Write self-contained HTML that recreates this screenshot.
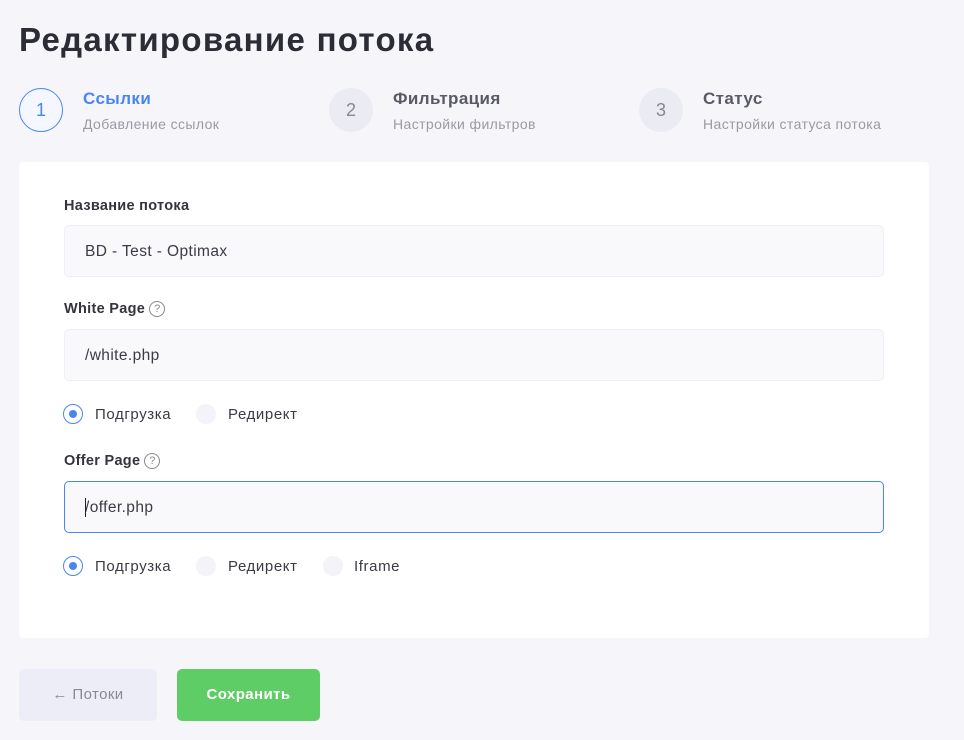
<!DOCTYPE html>
<html><head><meta charset="utf-8"><style>
*{box-sizing:border-box;margin:0;padding:0}
body{width:964px;height:740px;background:#f5f5fa;font-family:"Liberation Sans",sans-serif;position:relative;overflow:hidden;color:#2f303a}
.a{position:absolute;white-space:nowrap}
h1{position:absolute;left:19px;top:21px;font-size:33px;font-weight:bold;color:#2b2c36;letter-spacing:1.3px}
.circ{position:absolute;width:44px;height:44px;border-radius:50%;background:#ebebf3;color:#888;font-size:18px;text-align:center;line-height:44px}
.st{font-size:17px;font-weight:bold;color:#5a5a66;letter-spacing:0.4px}
.ss{font-size:14px;color:#9a9aa3;letter-spacing:0.4px}
.card{position:absolute;left:19px;top:162px;width:910px;height:476px;background:#fff;border-radius:4px}
.lbl{font-size:14.5px;font-weight:bold;color:#33343d;letter-spacing:0.3px}
.inp{position:absolute;left:64px;width:820px;height:52px;background:#f9f9fc;border:1px solid #eeeef4;border-radius:5px;font-size:15.5px;color:#3a3b44;padding-left:20px;line-height:52px;letter-spacing:0.4px}
.r{position:absolute;width:20px;height:20px;border-radius:50%;background:#f3f3f9}
.r.on{background:#fff;border:1px solid #4a86f0}
.r.on::after{content:"";position:absolute;left:5px;top:5px;width:8px;height:8px;border-radius:50%;background:#4a86f0}
.rt{font-size:15px;color:#3a3b44;letter-spacing:0.6px}
.q{display:inline-block;width:16px;height:16px;border:1.3px solid #888;border-radius:50%;font-size:11px;text-align:center;line-height:14px;color:#888;vertical-align:1px;margin-left:4px;font-weight:normal;letter-spacing:0}
</style></head><body>
<h1>Редактирование потока</h1>
<div class="circ" style="left:19px;top:88px;background:#f4f7ff;border:1px solid #4a86f0;color:#4a86f0;line-height:42px">1</div>
<div class="a st" style="left:83px;top:89px;color:#4a86f0">Ссылки</div>
<div class="a ss" style="left:83px;top:116px">Добавление ссылок</div>
<div class="circ" style="left:329px;top:88px">2</div>
<div class="a st" style="left:393px;top:89px">Фильтрация</div>
<div class="a ss" style="left:393px;top:116px">Настройки фильтров</div>
<div class="circ" style="left:639px;top:88px">3</div>
<div class="a st" style="left:703px;top:89px">Статус</div>
<div class="a ss" style="left:703px;top:116px">Настройки статуса потока</div>
<div class="card"></div>
<div class="a lbl" style="left:64px;top:198px">Название потока</div>
<div class="inp" style="top:225px">BD - Test - Optimax</div>
<div class="a lbl" style="left:64px;top:301px">White Page<span class="q">?</span></div>
<div class="inp" style="top:329px">/white.php</div>
<div class="r on" style="left:63px;top:404px"></div><div class="a rt" style="left:95px;top:406px">Подгрузка</div>
<div class="r" style="left:196px;top:404px"></div><div class="a rt" style="left:228px;top:406px">Редирект</div>
<div class="a lbl" style="left:64px;top:453px">Offer Page<span class="q">?</span></div>
<div class="inp" style="top:481px;border-color:#4a86f0">/offer.php</div>
<div class="a" style="left:85px;top:498px;width:1px;height:19px;background:#222"></div>
<div class="r on" style="left:63px;top:556px"></div><div class="a rt" style="left:95px;top:558px">Подгрузка</div>
<div class="r" style="left:196px;top:556px"></div><div class="a rt" style="left:228px;top:558px">Редирект</div>
<div class="r" style="left:323px;top:556px"></div><div class="a rt" style="left:354px;top:558px">Iframe</div>
<div class="a" style="left:19px;top:669px;width:138px;height:52px;background:#ededf7;border-radius:5px;color:#8a8a95;font-size:15px;text-align:center;line-height:52px;letter-spacing:0.4px">← Потоки</div>
<div class="a" style="left:177px;top:669px;width:143px;height:52px;background:#5fcd65;border-radius:5px;color:#fff;font-weight:bold;font-size:15px;text-align:center;line-height:52px;letter-spacing:0.4px">Сохранить</div>
</body></html>
